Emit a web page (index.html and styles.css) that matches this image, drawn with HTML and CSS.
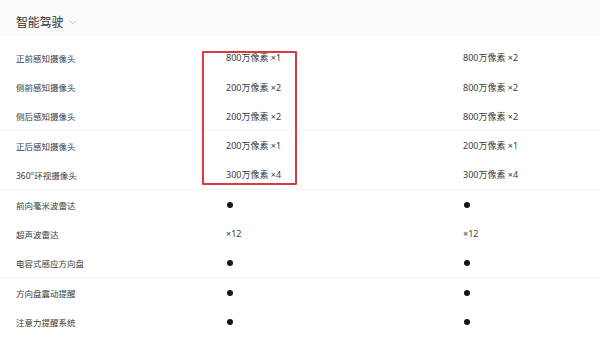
FILE: index.html
```html
<!DOCTYPE html>
<html lang="zh">
<head>
<meta charset="utf-8">
<link rel="stylesheet" href="styles.css">
</head>
<body>
<div class="page">
  <div class="head">
    <span class="title">智能驾驶</span>
    <svg class="chev" width="8" height="5" viewBox="0 0 8 5"><path d="M0.5 0.5 L4 4 L7.5 0.5" fill="none" stroke="#c4c4c4" stroke-width="0.9"/></svg>
  </div>
  <div class="table">
    <div class="group">
      <div class="row"><span class="label">正前感知摄像头</span><span class="val">800万像素 ×1</span><span class="val">800万像素 ×2</span></div>
      <div class="row"><span class="label">侧前感知摄像头</span><span class="val">200万像素 ×2</span><span class="val">800万像素 ×2</span></div>
      <div class="row sep"><span class="label">侧后感知摄像头</span><span class="val">200万像素 ×2</span><span class="val">800万像素 ×2</span></div>
      <div class="row"><span class="label">正后感知摄像头</span><span class="val">200万像素 ×1</span><span class="val">200万像素 ×1</span></div>
      <div class="row sep"><span class="label">360°环视摄像头</span><span class="val">300万像素 ×4</span><span class="val">300万像素 ×4</span></div>
      <div class="highlight"></div>
    </div>
    <div class="row"><span class="label">前向毫米波雷达</span><span class="val"><i class="dot"></i></span><span class="val"><i class="dot"></i></span></div>
    <div class="row"><span class="label">超声波雷达</span><span class="val">×12</span><span class="val">×12</span></div>
    <div class="row sep"><span class="label">电容式感应方向盘</span><span class="val"><i class="dot"></i></span><span class="val"><i class="dot"></i></span></div>
    <div class="row"><span class="label">方向盘震动提醒</span><span class="val"><i class="dot"></i></span><span class="val"><i class="dot"></i></span></div>
    <div class="row"><span class="label">注意力提醒系统</span><span class="val"><i class="dot"></i></span><span class="val"><i class="dot"></i></span></div>
  </div>
</div>
</body>
</html>
```
FILE: styles.css
```css
* { box-sizing: border-box; }
html, body { margin: 0; padding: 0; background: #fff; }
body {
  font-family: "Noto Sans", "Noto Sans CJK SC", sans-serif;
  color: #333;
  width: 600px;
  height: 338px;
  overflow: hidden;
}
.head {
  height: 36px;
  background: #fafafa;
  display: flex;
  align-items: center;
  padding: 7px 0 0 16px;
  gap: 6px;
}
.title {
  font-size: 12px;
  color: #333;
  letter-spacing: -0.2px;
}
.chev { margin-top: 2px; }
.table { padding-top: 7.3px; }
.group { position: relative; }
.row {
  height: 29.33px;
  display: grid;
  grid-template-columns: 210px 237px 1fr;
  align-items: center;
  padding-left: 16px;
}
.row.sep { border-bottom: 1px solid #f7f7f7; }
.label {
  font-size: 8.5px;
  color: #3a3a3a;
}
.val {
  font-size: 9px;
  color: #3a3a3a;
  display: flex;
  align-items: center;
}
.dot {
  display: block;
  width: 6px;
  height: 6px;
  border-radius: 50%;
  background: #151515;
  margin-left: 0.5px;
}
.highlight {
  position: absolute;
  left: 202px;
  top: 7.5px;
  width: 95px;
  height: 134px;
  border: 2px solid #d83a42;
  border-radius: 1px;
}
```
